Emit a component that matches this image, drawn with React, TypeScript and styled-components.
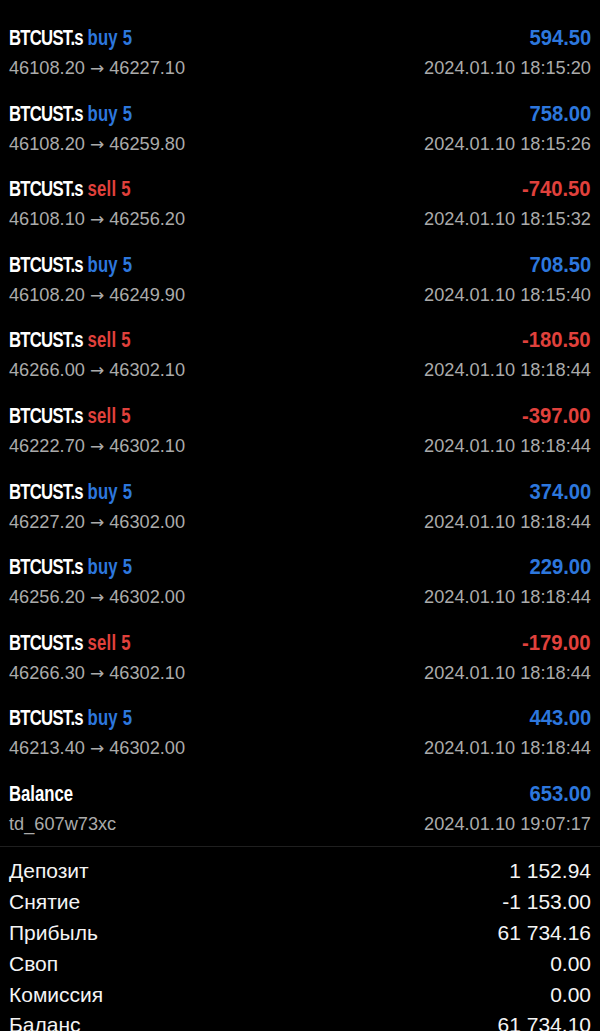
import React, { FC } from "react"
import styled, { createGlobalStyle } from "styled-components"

type Side = "buy" | "sell"

type Deal = {
  side: Side
  open: string
  close: string
  profit: string
  time: string
}

const deals: Deal[] = [
  { side: "buy", open: "46108.20", close: "46227.10", profit: "594.50", time: "2024.01.10 18:15:20" },
  { side: "buy", open: "46108.20", close: "46259.80", profit: "758.00", time: "2024.01.10 18:15:26" },
  { side: "sell", open: "46108.10", close: "46256.20", profit: "-740.50", time: "2024.01.10 18:15:32" },
  { side: "buy", open: "46108.20", close: "46249.90", profit: "708.50", time: "2024.01.10 18:15:40" },
  { side: "sell", open: "46266.00", close: "46302.10", profit: "-180.50", time: "2024.01.10 18:18:44" },
  { side: "sell", open: "46222.70", close: "46302.10", profit: "-397.00", time: "2024.01.10 18:18:44" },
  { side: "buy", open: "46227.20", close: "46302.00", profit: "374.00", time: "2024.01.10 18:18:44" },
  { side: "buy", open: "46256.20", close: "46302.00", profit: "229.00", time: "2024.01.10 18:18:44" },
  { side: "sell", open: "46266.30", close: "46302.10", profit: "-179.00", time: "2024.01.10 18:18:44" },
  { side: "buy", open: "46213.40", close: "46302.00", profit: "443.00", time: "2024.01.10 18:18:44" },
]

const summary = [
  ["Депозит", "1 152.94"],
  ["Снятие", "-1 153.00"],
  ["Прибыль", "61 734.16"],
  ["Своп", "0.00"],
  ["Комиссия", "0.00"],
  ["Баланс", "61 734.10"],
]

const BLUE = "#2d77dd"
const RED = "#e0413c"

const GlobalStyle = createGlobalStyle`
  html, body {
    margin: 0;
    padding: 0;
    background: #000;
  }
  body {
    font-family: "Liberation Sans", Arial, sans-serif;
    color: #fff;
    overflow: hidden;
  }
`

const Screen = styled.div`
  width: 600px;
  height: 1031px;
  overflow: hidden;
  background: #000;
`

const DealList = styled.div`
  padding-top: 25px;
`

const Row = styled.div<{ $last?: boolean }>`
  height: ${p => (p.$last ? "65px" : "75.6px")};
  padding: 0 9px;
  display: flex;
  flex-direction: column;
`

const Line = styled.div`
  display: flex;
  justify-content: space-between;
  align-items: baseline;
`

// the app uses a condensed semibold face, squeezed here from a regular bold one
const Title = styled.div`
  font-family: "Liberation Sans", Arial, sans-serif;
  font-weight: 700;
  font-size: 22px;
  line-height: 26px;
  color: #fff;
  white-space: nowrap;
  transform: scaleX(0.76);
  transform-origin: left center;
`

const Symbol = styled.span`
  letter-spacing: -1px;
`

const SideLabel = styled.span<{ $side: Side }>`
  color: ${p => (p.$side === "buy" ? BLUE : RED)};
  letter-spacing: 0.3px;
`

const Profit = styled(Title)<{ $neg?: boolean }>`
  color: ${p => (p.$neg ? RED : BLUE)};
  transform: scaleX(0.92);
  transform-origin: right center;
`

const Sub = styled(Line)`
  margin-top: 5px;
  font-size: 18.2px;
  line-height: 24px;
  color: #ababab;
  white-space: nowrap;
`

const Arrow = styled.span`
  font-family: "DejaVu Sans", sans-serif;
  font-size: 17px;
`

const Divider = styled.div`
  height: 1px;
  background: #1f1f1f;
`

const Summary = styled.div`
  padding: 9.5px 9px 0;
`

const SummaryRow = styled.div`
  display: flex;
  justify-content: space-between;
  font-size: 21px;
  line-height: 30.8px;
  color: #f4f4f4;
`

const DealRow: FC<{ deal: Deal }> = ({ deal }) => (
  <Row>
    <Line>
      <Title>
        <Symbol>BTCUST.s</Symbol> <SideLabel $side={deal.side}>{deal.side} 5</SideLabel>
      </Title>
      <Profit $neg={deal.profit.startsWith("-")}>{deal.profit}</Profit>
    </Line>
    <Sub>
      <span>
        {deal.open} <Arrow>→</Arrow> {deal.close}
      </span>
      <span>{deal.time}</span>
    </Sub>
  </Row>
)

export default function App() {
  return (
    <Screen>
      <GlobalStyle />
      <DealList>
        {deals.map((d, i) => (
          <DealRow key={i} deal={d} />
        ))}
        <Row $last>
          <Line>
            <Title>Balance</Title>
            <Profit>653.00</Profit>
          </Line>
          <Sub>
            <span>td_607w73xc</span>
            <span>2024.01.10 19:07:17</span>
          </Sub>
        </Row>
      </DealList>
      <Divider />
      <Summary>
        {summary.map(([label, value]) => (
          <SummaryRow key={label}>
            <span>{label}</span>
            <span>{value}</span>
          </SummaryRow>
        ))}
      </Summary>
    </Screen>
  )
}
